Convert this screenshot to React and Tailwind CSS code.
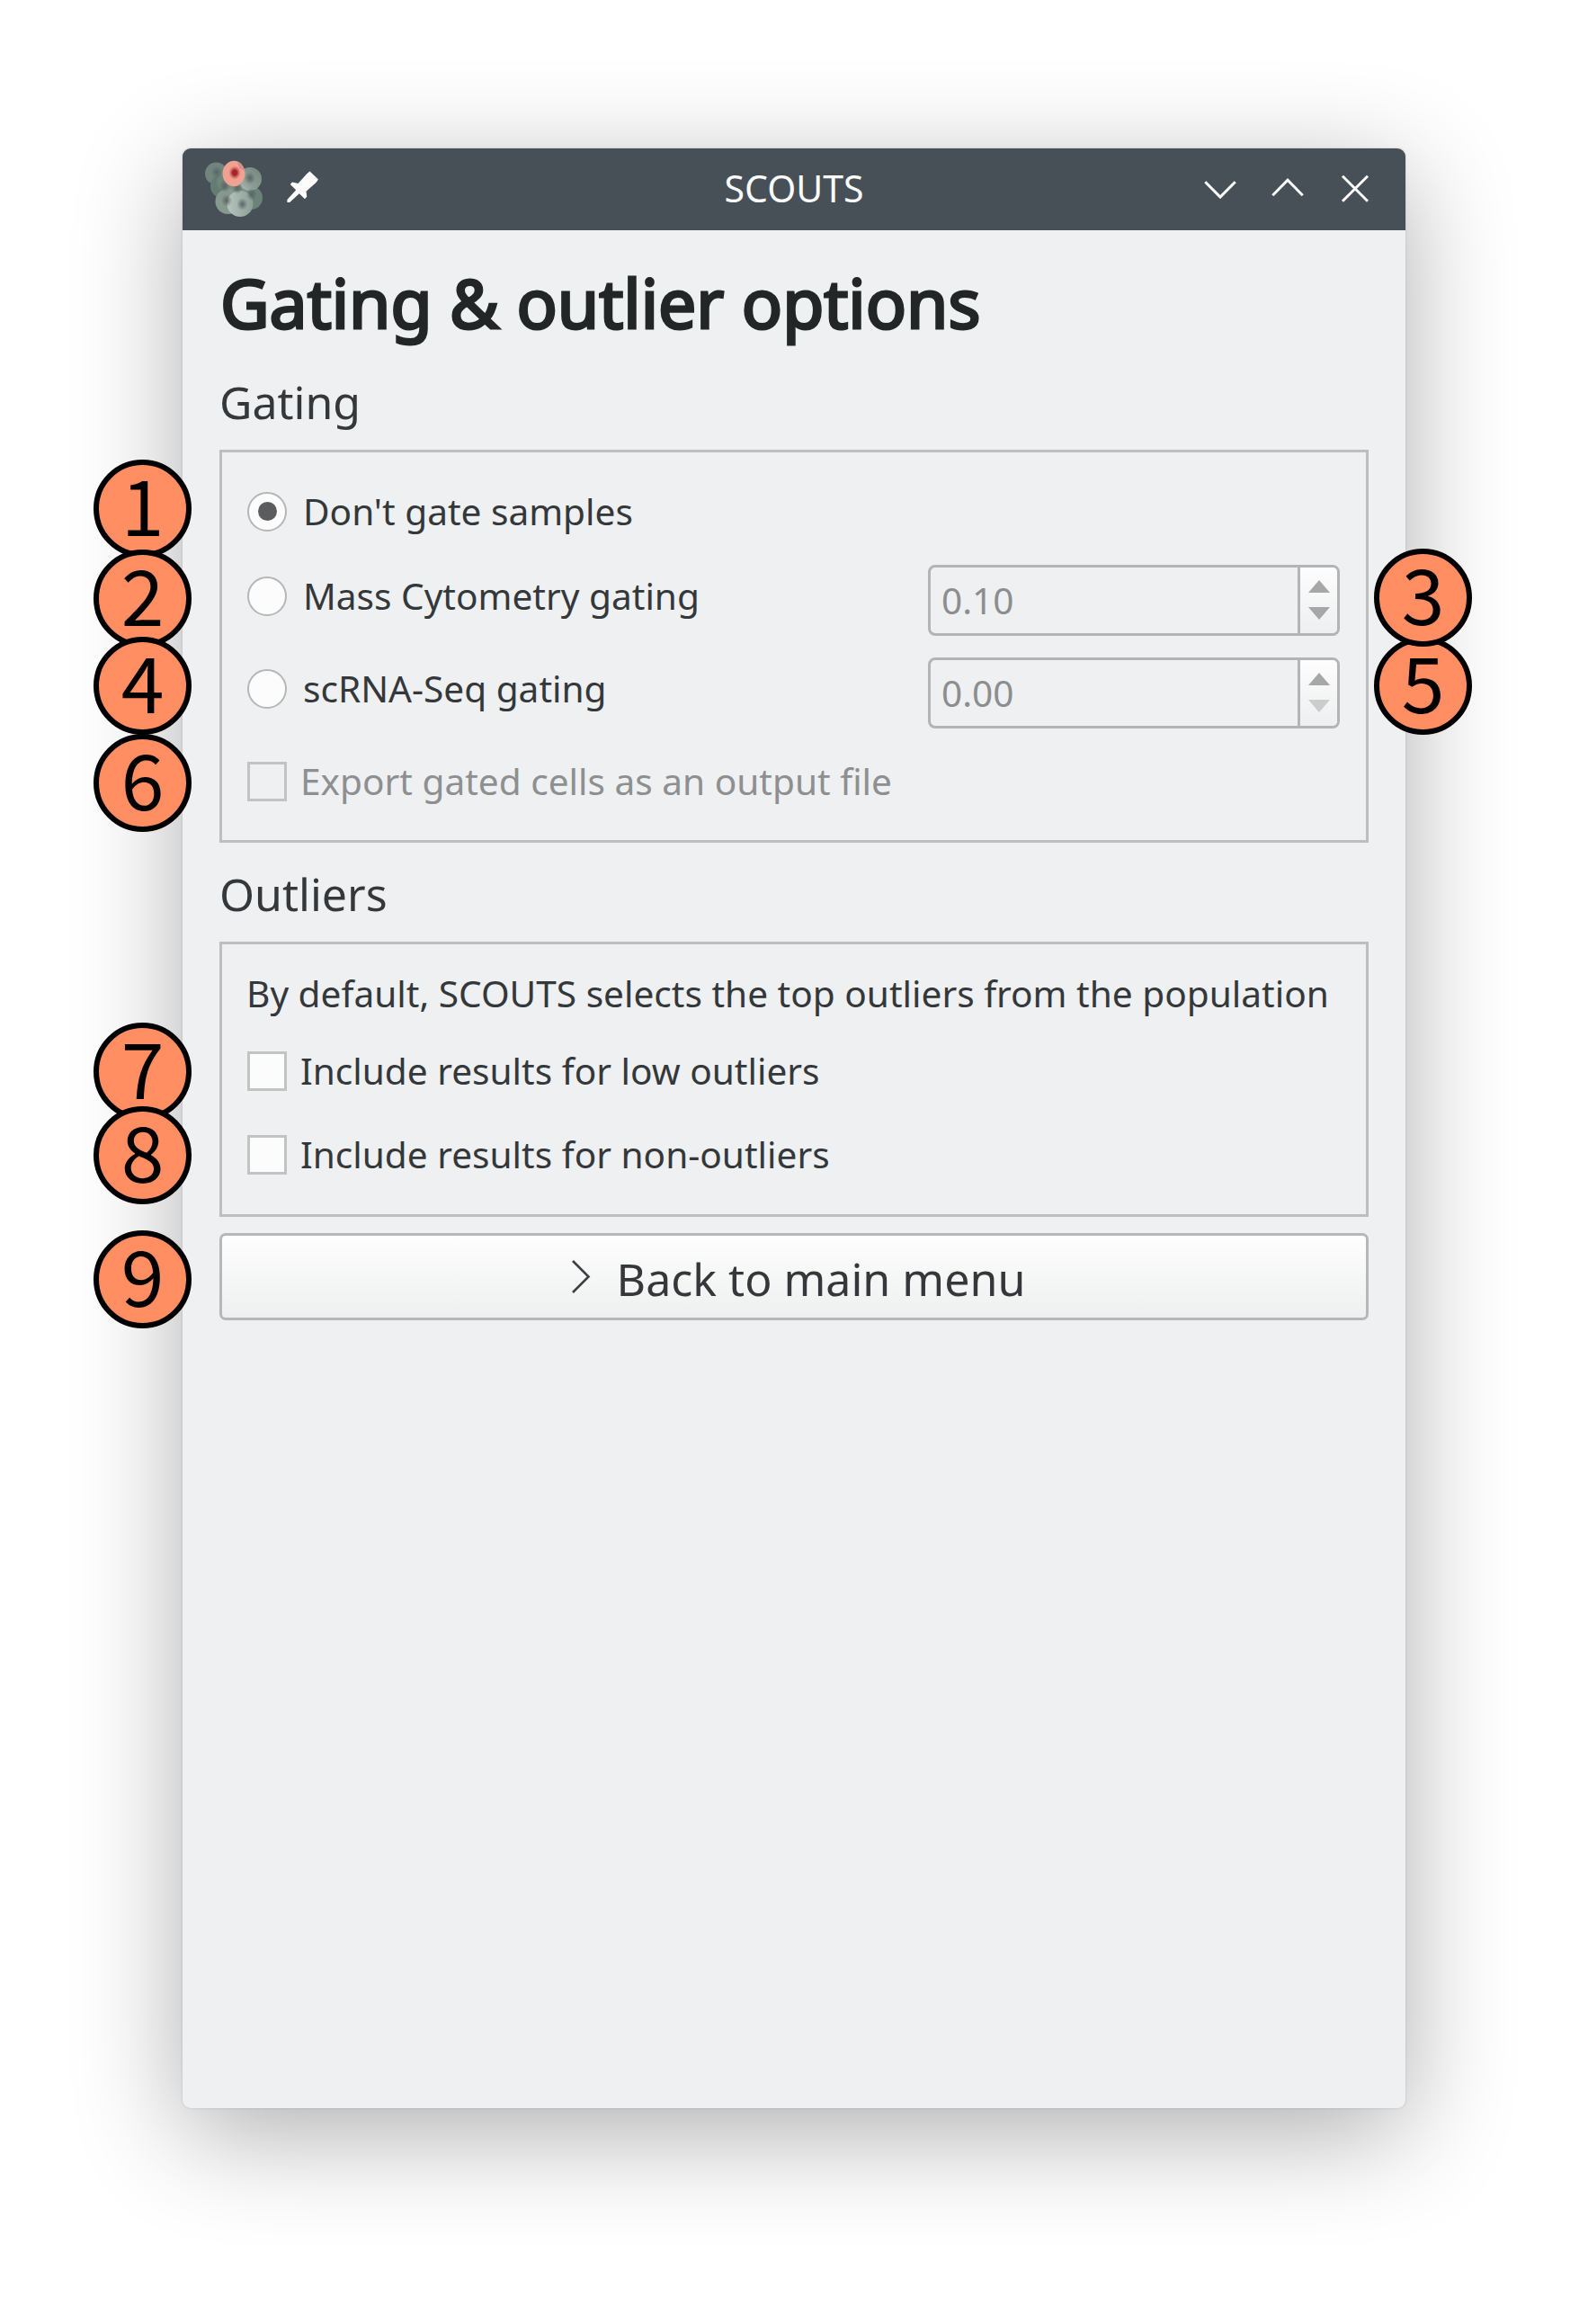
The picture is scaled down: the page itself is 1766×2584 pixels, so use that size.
const CELLS = [
  { cx: 12.5, cy: 15, r: 12.5, fill: "#71857c" },
  { cx: 19, cy: 29, r: 13, fill: "#667c72" },
  { cx: 24, cy: 24, r: 11, fill: "#6f857b" },
  { cx: 51, cy: 42, r: 13, fill: "#6b8278" },
  { cx: 36, cy: 33, r: 13, fill: "#7a8f85" },
  { cx: 50, cy: 21, r: 13, fill: "url(#cellMid)" },
  { cx: 25.5, cy: 46, r: 14, fill: "#87998f" },
  { cx: 39, cy: 48.5, r: 14.5, fill: "url(#cellLight)" },
];

const NUCLEI = [
  [13, 13.5],
  [50, 20],
  [24, 45],
  [41.5, 49],
  [52, 38],
  [36, 31],
  [22, 29],
];

function AppIcon() {
  return (
    <svg viewBox="0 0 64 64" className="size-16 shrink-0">
      <defs>
        <linearGradient id="cellMid" x1="1" y1="0" x2="0" y2="1">
          <stop offset="0" stopColor="#73877e" />
          <stop offset="0.6" stopColor="#8b9c94" />
          <stop offset="1" stopColor="#b4c2bb" />
        </linearGradient>
        <linearGradient id="cellLight">
          <stop offset="0" stopColor="#b6c5be" />
          <stop offset="1" stopColor="#8a9e94" />
        </linearGradient>
        <radialGradient id="nucleus">
          <stop offset="0" stopColor="#5a6466" />
          <stop offset="1" stopColor="#5a6466" stopOpacity="0" />
        </radialGradient>
        <radialGradient id="redNucleus">
          <stop offset="0.4" stopColor="#a8242c" />
          <stop offset="1" stopColor="#d0605c" stopOpacity="0.1" />
        </radialGradient>
      </defs>
      {CELLS.map((c, i) => (
        <circle key={i} {...c} />
      ))}
      {NUCLEI.map(([x, y], i) => (
        <ellipse key={i} cx={x} cy={y} rx="6" ry="7" fill="url(#nucleus)" />
      ))}
      <ellipse cx="32" cy="15" rx="12.5" ry="14.3" fill="#efa192" />
      <path d="M36 1.5 A12.5 14 0 0 1 44 12 L38 9 Z" fill="#d98f86" />
      <ellipse cx="33" cy="14" rx="6.5" ry="7.5" fill="url(#redNucleus)" />
    </svg>
  );
}

function PinIcon() {
  return (
    <svg viewBox="0 0 35 36" className="mb-[4px] ml-[27px] h-9 w-[35px] shrink-0" fill="#fcfcfc">
      <path d="M25.5 .5 L35 9.5 L32.5 13 L21.5 22.7 L22.3 28.5 L20 31.2 L13.8 25.3 L3.2 35 L.4 35 L.4 32 L10.2 21.2 L3.8 15 L6 12.4 L12.5 14 L22.5 3 Z" />
    </svg>
  );
}

function TitleButton({ d }) {
  return (
    <svg viewBox="0 0 36 36" className="size-9" fill="none" stroke="#fcfcfc" strokeWidth="3">
      <path d={d} />
    </svg>
  );
}

function TitleBar() {
  return (
    <header className="grid h-[91px] grid-cols-[1fr_auto_1fr] items-center rounded-t-[9px] bg-[#475057] text-[#fcfcfc]">
      <div className="flex items-center pb-[2px] pl-[25px]">
        <AppIcon />
        <PinIcon />
      </div>
      <span className="pb-[3px] text-[41px] leading-[56px]">SCOUTS</span>
      <div className="flex items-center justify-end gap-[39px] pr-[38px]">
        <TitleButton d="M1.3 9.2 L18 26 L34.7 9.2" />
        <TitleButton d="M1.3 24.2 L18 7.2 L34.7 24.2" />
        <TitleButton d="M4 2.8 L32 30.8 M32 2.8 L4 30.8" />
      </div>
    </header>
  );
}

function Radio({ label, checked }) {
  return (
    <label className="flex items-center gap-[18px]">
      <span className="flex size-11 items-center justify-center rounded-full border-2 border-[#b4b6b7] bg-[#fcfcfc]">
        {checked && <span className="size-[21px] rounded-full bg-[#5a5c5e]" />}
      </span>
      <span>{label}</span>
    </label>
  );
}

function Checkbox({ label, disabled }) {
  return (
    <label className={disabled ? "flex items-center gap-[15px] text-[#8d8f90]" : "flex items-center gap-[15px]"}>
      <span
        className={
          disabled
            ? "size-11 border-[3px] border-[#c2c4c4]"
            : "size-11 border-[3px] border-[#c2c4c4] bg-[#fcfcfc]"
        }
      />
      <span>{label}</span>
    </label>
  );
}

function SpinBox({ value, atMinimum }) {
  return (
    <div className="mt-[9px] flex h-[79px] w-[458px] overflow-hidden rounded-[8px] border-[3px] border-[#b2b4b5] text-[#8b8d8e]">
      <span className="flex-1 pl-[12px] leading-[74px]">{value}</span>
      <span className="flex w-[44px] flex-col items-center justify-center gap-[16px] border-l-[3px] border-[#b2b4b5] bg-linear-to-b from-[#fdfdfd] to-[#eeeff0]">
        <svg viewBox="0 0 24 14" className="h-[14px] w-6">
          <path d="M0 14 L12 0 L24 14 Z" fill="#a6a7a8" />
        </svg>
        <svg viewBox="0 0 24 14" className="h-[14px] w-6">
          <path d="M0 0 L12 14 L24 0 Z" fill={atMinimum ? "#cbcdcd" : "#a6a7a8"} />
        </svg>
      </span>
    </div>
  );
}

const BADGES = [
  { n: 1, place: "left-[104px] top-[511px]" },
  { n: 2, place: "left-[104px] top-[611px]" },
  { n: 4, place: "left-[104px] top-[708px]" },
  { n: 6, place: "left-[104px] top-[816px]" },
  { n: 5, place: "left-[1528px] top-[708px]" },
  { n: 3, place: "left-[1528px] top-[610px]" },
  { n: 7, place: "left-[104px] top-[1137px]" },
  { n: 8, place: "left-[104px] top-[1230px]" },
  { n: 9, place: "left-[104px] top-[1368px]" },
];

function Badge({ n, place }) {
  return (
    <div
      className={`absolute flex size-[109px] items-center justify-center rounded-full border-[6px] border-black bg-[#ff8f63] pb-[13px] font-['Noto_Sans_CJK_JP',sans-serif] text-[86px] leading-none text-black ${place}`}
    >
      {n}
    </div>
  );
}

export default function App() {
  return (
    <div className="relative h-[2584px] w-[1766px] overflow-hidden bg-white pt-[165px] pl-[203px] font-['Noto_Sans',sans-serif] text-[40.6px] leading-[56px] whitespace-nowrap text-[#34383a]">
      <main className="h-[2179px] w-[1360px] rounded-[9px] bg-[#eff0f2] shadow-[0_28px_120px_rgba(0,0,0,0.32),0_0_3px_rgba(0,0,0,0.15)]">
        <TitleBar />
        <div className="flex flex-col px-[41px]">
          <h1 className="pl-px text-[75px] leading-[161px] text-[#232627] [-webkit-text-stroke:3px_#232627]">
            Gating &amp; outlier options
          </h1>
          <h2 className="mt-px mb-6 text-[50px] leading-[58px]">Gating</h2>
          <section className="h-[437px] border-[3px] border-[#bcbebf] pt-[21px] pr-[29px] pl-7">
            <div className="flex h-[89px] items-center">
              <Radio label="Don't gate samples" checked />
            </div>
            <div className="flex h-[99px] items-center justify-between">
              <Radio label="Mass Cytometry gating" />
              <SpinBox value="0.10" />
            </div>
            <div className="flex h-[107px] items-center justify-between">
              <Radio label="scRNA-Seq gating" />
              <SpinBox value="0.00" atMinimum />
            </div>
            <div className="flex h-[99px] items-center">
              <Checkbox label="Export gated cells as an output file" disabled />
            </div>
          </section>
          <h2 className="mt-[3px] -mb-px text-[50px] leading-[108px]">Outliers</h2>
          <section className="h-[306px] border-[3px] border-[#bcbebf] pt-4 pl-7">
            <p className="-ml-px leading-[78px]">
              By default, SCOUTS selects the top outliers from the population
            </p>
            <div className="flex h-[93px] items-center">
              <Checkbox label="Include results for low outliers" />
            </div>
            <div className="flex h-[94px] items-center">
              <Checkbox label="Include results for non-outliers" />
            </div>
          </section>
          <button className="mt-[18px] flex h-[97px] items-center justify-center gap-[20px] rounded-[7px] border-[3px] border-[#b5b7b8] bg-linear-to-b from-[#fefefe] to-[#eeefef] text-[50.1px] leading-[70px]">
            <svg viewBox="0 0 40 40" className="size-10" fill="none" stroke="#3c4042" strokeWidth="2.6">
              <path d="M11 2 L28.5 19.5 L11 37" />
            </svg>
            <span className="pt-[4px]">Back to main menu</span>
          </button>
        </div>
      </main>
      {BADGES.map((b) => (
        <Badge key={b.n} {...b} />
      ))}
    </div>
  );
}
